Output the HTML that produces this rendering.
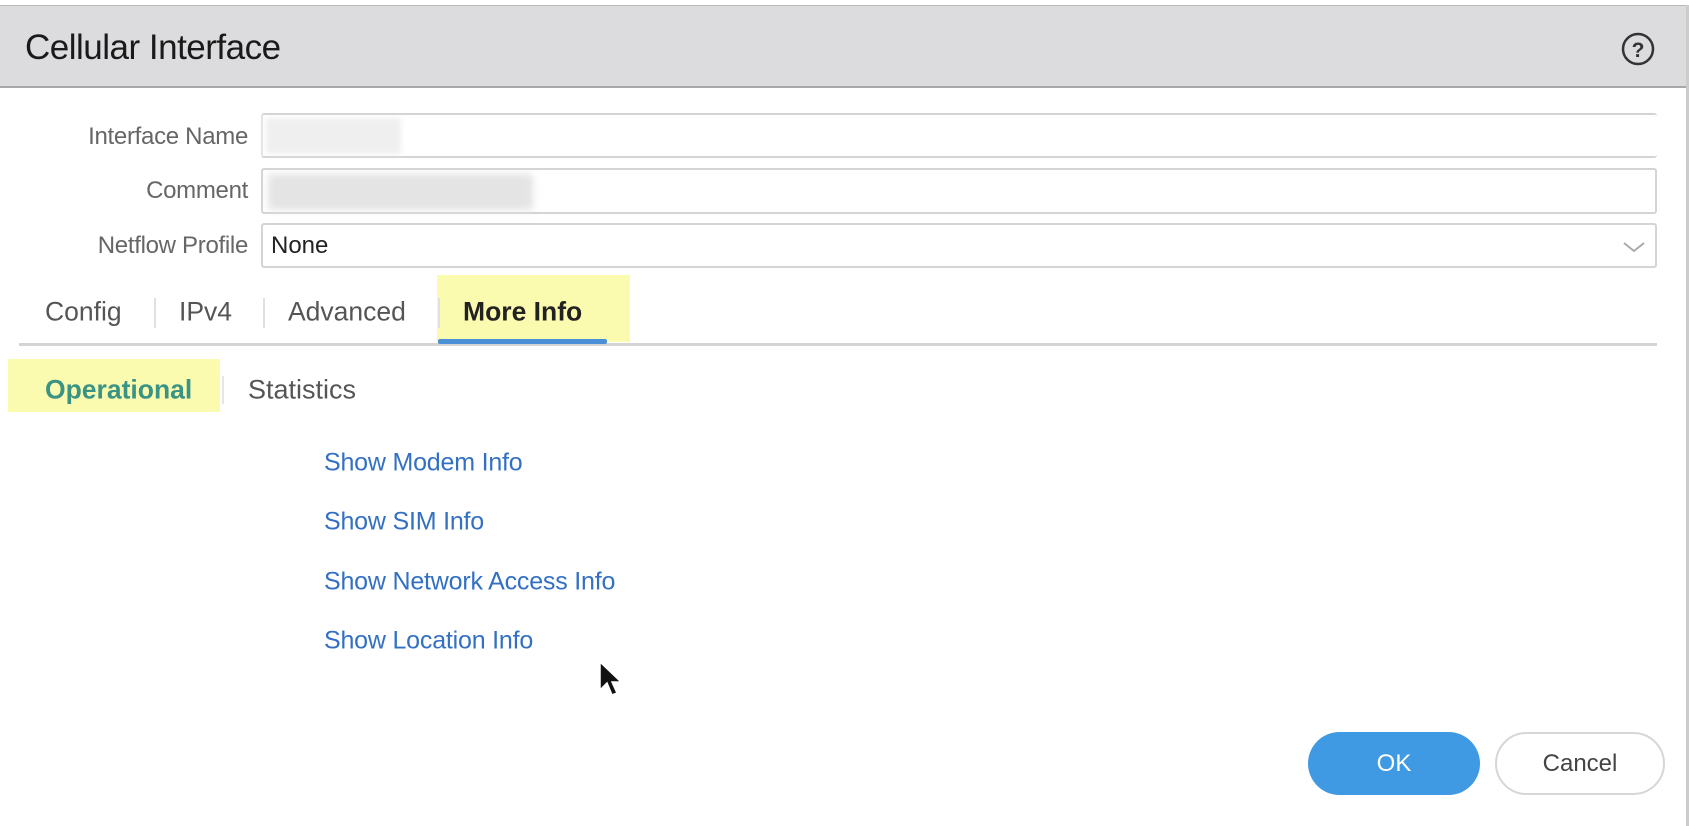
<!DOCTYPE html>
<html><head><style>
*{margin:0;padding:0;box-sizing:border-box}
body{width:1689px;height:826px;background:#fff;position:relative;overflow:hidden;font-family:"Liberation Sans",sans-serif}
.a{position:absolute}
.lbl{position:absolute;right:1441px;font-size:24px;color:#666;transform:translateY(-50%);white-space:nowrap;letter-spacing:-0.3px}
.inp{position:absolute;left:261px;width:1396px;border:2px solid #d4d4d4;border-radius:3px;background:#fff}
.tab{position:absolute;top:312px;transform:translateY(-50%);font-size:26.5px;color:#555;white-space:nowrap}
.sep{position:absolute;top:298px;width:2px;height:30px;background:#e0e0e0}
.lnk{position:absolute;left:324px;font-size:25px;color:#3370c3;transform:translateY(-50%);white-space:nowrap;letter-spacing:-0.2px}
</style></head><body>
<div class="a" style="left:0;top:5px;width:1689px;height:83px;background:#dcdcde;border-bottom:2px solid #a8a8a8"></div>
<div class="a" style="left:0;top:5px;width:1689px;height:1px;background:#bbb"></div>
<div class="a" style="left:25px;top:48px;transform:translateY(-50%);font-size:35px;color:#1a1a1a;letter-spacing:-0.5px">Cellular Interface</div>
<svg class="a" style="left:1621px;top:32px" width="34" height="34" viewBox="0 0 34 34"><circle cx="17" cy="17" r="15" fill="none" stroke="#333" stroke-width="2.5"/><text x="17" y="25" text-anchor="middle" font-family="Liberation Sans" font-weight="bold" font-size="21" fill="#333">?</text></svg>
<div class="a" style="left:1686px;top:5px;width:3px;height:821px;background:#ccc"></div>

<div class="lbl" style="top:137px">Interface Name</div>
<div class="inp" style="top:113px;height:45px;border-left-color:#e4e4e4;border-right:none"></div>
<div class="a" style="left:266px;top:118px;width:135px;height:36px;background:#efefef;filter:blur(3px)"></div>
<div class="lbl" style="top:191px">Comment</div>
<div class="inp" style="top:168px;height:46px"></div>
<div class="a" style="left:268px;top:174px;width:265px;height:36px;background:#e4e4e4;filter:blur(4px)"></div>
<div class="lbl" style="top:246px">Netflow Profile</div>
<div class="inp" style="top:223px;height:45px"></div>
<div class="a" style="left:271px;top:246px;transform:translateY(-50%);font-size:24px;color:#222">None</div>
<svg class="a" style="left:1622px;top:240px" width="24" height="14"><path d="M2 3 L12 11 L22 3" fill="none" stroke="#aaa" stroke-width="2"/></svg>

<div class="a" style="left:437px;top:275px;width:193px;height:67px;background:#fbfbb0"></div>
<div class="tab" style="left:45px">Config</div>
<div class="sep" style="left:154px"></div>
<div class="tab" style="left:179px">IPv4</div>
<div class="sep" style="left:263px"></div>
<div class="tab" style="left:288px">Advanced</div>
<div class="sep" style="left:438px"></div>
<div class="tab" style="left:463px;color:#222;font-weight:bold">More Info</div>
<div class="a" style="left:19px;top:343px;width:1638px;height:3px;background:#d4d4d4"></div>
<div class="a" style="left:438px;top:339px;width:169px;height:5px;background:#4a90d6;border-radius:2px"></div>

<div class="a" style="left:8px;top:359px;width:212px;height:53px;background:#fbfbb0"></div>
<div class="a" style="left:45px;top:390px;transform:translateY(-50%);font-size:26.5px;font-weight:bold;color:#3a9384">Operational</div>
<div class="a" style="left:222px;top:376px;width:2px;height:28px;background:#e6e6e6"></div>
<div class="a" style="left:248px;top:390px;transform:translateY(-50%);font-size:27px;color:#555">Statistics</div>

<div class="lnk" style="top:463px">Show Modem Info</div>
<div class="lnk" style="top:522px">Show SIM Info</div>
<div class="lnk" style="top:582px">Show Network Access Info</div>
<div class="lnk" style="top:641px">Show Location Info</div>

<svg class="a" style="left:598px;top:660px" width="26" height="40"><path d="M2 2 L2 30 L9 23 L14 35 L19 33 L14 22 L23 22 Z" fill="#111" stroke="#fff" stroke-width="1.5"/></svg>

<div class="a" style="left:1308px;top:732px;width:172px;height:63px;border-radius:32px;background:#3f99e3;color:#fff;font-size:24px;display:flex;align-items:center;justify-content:center">OK</div>
<div class="a" style="left:1495px;top:732px;width:170px;height:63px;border-radius:32px;background:#fff;border:2px solid #d6d6d6;color:#444;font-size:24px;display:flex;align-items:center;justify-content:center">Cancel</div>
</body></html>
